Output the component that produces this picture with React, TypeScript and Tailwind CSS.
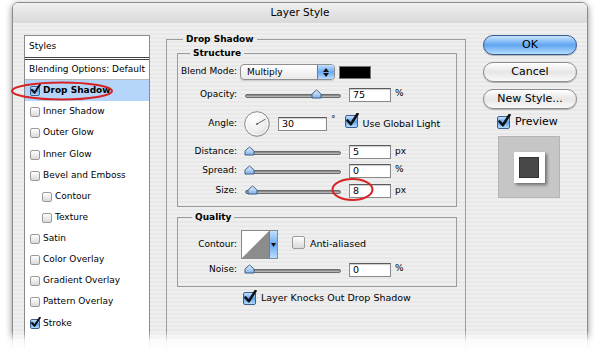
import React from "react";

type Box = "sm" | "lg";

function Check({ on = false, box = "sm" }: { on?: boolean; box?: Box }) {
  const size = box === "sm" ? "h-[10px] w-[10px]" : "h-[13px] w-[13px]";
  const face = on
    ? "border-[#3d5f8f] bg-gradient-to-b from-[#c4e2ff] via-[#5aa2ee] to-[#b3dcff]"
    : "border-[#9a9a9a] bg-gradient-to-b from-[#ffffff] to-[#d9d9d9]";
  return (
    <span className={`relative inline-block shrink-0 rounded-[2px] border ${size} ${face}`}>
      {on && (
        <svg
          viewBox="0 0 14 14"
          className="absolute -left-[1px] -top-[3px] h-[calc(100%+3px)] w-[calc(100%+3px)]"
        >
          <path
            d="M2.5 7.5 L5.8 11.2 L12.5 1"
            fill="none"
            stroke="#111"
            strokeWidth="2.6"
            strokeLinecap="round"
            strokeLinejoin="round"
          />
        </svg>
      )}
    </span>
  );
}

const layers = [
  { name: "Drop Shadow", on: true, sel: true },
  { name: "Inner Shadow" },
  { name: "Outer Glow" },
  { name: "Inner Glow", gap: true },
  { name: "Bevel and Emboss" },
  { name: "Contour", sub: true },
  { name: "Texture", sub: true },
  { name: "Satin" },
  { name: "Color Overlay" },
  { name: "Gradient Overlay" },
  { name: "Pattern Overlay" },
  { name: "Stroke", on: true, gap: true },
];

function Slider({ pos }: { pos: number }) {
  return (
    <div className="relative ml-[8px] h-[14px] w-[96px]">
      <div className="absolute left-0 right-0 top-[6px] h-[4px] rounded-full border border-[#6d6d6d] bg-gradient-to-b from-[#7c7c7c] to-[#c4c4c4]" />
      <svg
        width="11"
        height="10"
        viewBox="0 0 11 10"
        className="absolute top-[1px]"
        style={{ left: pos - 5 }}
      >
        <defs>
          <linearGradient id="thumb" x1="0" y1="0" x2="0" y2="1">
            <stop offset="0" stopColor="#e6f2ff" />
            <stop offset="1" stopColor="#7fb1e8" />
          </linearGradient>
        </defs>
        <path
          d="M1 9 L1 5.5 Q1 4.5 2 4 L5.5 1 L9 4 Q10 4.5 10 5.5 L10 9 Z"
          fill="url(#thumb)"
          stroke="#3f5f86"
          strokeWidth="1"
        />
      </svg>
    </div>
  );
}

function Field({ value, w = "w-[42px]", ml = "ml-[8px]" }: { value: string; w?: string; ml?: string }) {
  return (
    <div
      className={`${ml} ${w} h-[14px] border border-[#8a8a8a] border-t-[#5a5a5a] bg-white pl-[3px] text-[9.5px] leading-[12px] shadow-[inset_0_1px_1px_rgba(0,0,0,0.2)]`}
    >
      {value}
    </div>
  );
}

function Label({ text }: { text: string }) {
  return <span className="w-[59px] shrink-0 text-right">{text}</span>;
}

function AquaButton({ text, primary = false, mt }: { text: string; primary?: boolean; mt: string }) {
  const face = primary
    ? "border-[#36598f] bg-gradient-to-b from-[#c9e5ff] via-[#5fa4f0] to-[#b5defe]"
    : "border-[#8c8c8c] bg-gradient-to-b from-[#ffffff] via-[#e6e6e6] to-[#f9f9f9]";
  return (
    <div
      className={`${mt} flex h-[20px] w-[94px] items-center justify-center rounded-full border text-[11px] shadow-[0_1px_1px_rgba(0,0,0,0.25)] ${face}`}
    >
      {text}
    </div>
  );
}

export default function App() {
  return (
    <div className="relative h-[351px] w-[600px] overflow-hidden bg-white font-['DejaVu_Sans',sans-serif] text-black">
      <div className="mx-[12px] mt-[2px] h-[380px] overflow-hidden rounded-t-[6px] border border-[#8d8d8d] shadow-[0_2px_7px_rgba(0,0,0,0.45)]">
        {/* title bar */}
        <div className="flex h-[20px] items-center justify-center bg-gradient-to-b from-[#f0f0f0] to-[#d8d8d8] text-[10.5px]">
          Layer Style
        </div>

        <div className="flex h-full bg-[repeating-linear-gradient(180deg,#efefef_0px,#efefef_2px,#e8e8e8_2px,#e8e8e8_4px)]">
          {/* styles list */}
          <div className="ml-[11px] mt-[12px] h-[330px] w-[126px] border border-[#8a8a8a] bg-white text-[9px]">
            <div className="flex h-[24px] items-center border-b-[3px] border-double border-[#444] pl-[4px]">
              Styles
            </div>
            <div className="flex h-[20px] items-center border-b border-[#b8b8b8] pl-[4px]">
              Blending Options: Default
            </div>
            {layers.map((l) => (
              <div
                key={l.name}
                className={`flex h-[21px] items-center gap-[3px] ${l.gap ? "mt-[1px]" : ""} ${
                  l.sub ? "pl-[17px]" : "pl-[5px]"
                } ${l.sel ? "bg-[#b5d5fb] font-bold" : ""}`}
              >
                <Check on={l.on} />
                <span>{l.name}</span>
              </div>
            ))}
          </div>

          {/* drop shadow group */}
          <fieldset className="ml-[16px] mt-[10px] h-[330px] w-[300px] border border-[#9c9c9c] text-[9px]">
            <legend className="ml-[16px] px-[3px] font-bold leading-[12px]">Drop Shadow</legend>
            <div className="pl-[10px] pr-[8px]">
              <fieldset className="mt-[2px] border border-[#9c9c9c] pb-[8px]">
                <legend className="ml-[12px] px-[3px] font-bold leading-[12px]">Structure</legend>

                <div className="mt-[5px] flex h-[16px] items-center">
                  <Label text="Blend Mode:" />
                  <div className="ml-[3px] flex h-[16px] w-[95px] overflow-hidden rounded-[4px] border border-[#8f8f8f] bg-gradient-to-b from-white to-[#e9e9e9] shadow-[0_1px_1px_rgba(0,0,0,0.15)]">
                    <span className="flex-1 pl-[6px] leading-[14px]">Multiply</span>
                    <span className="flex w-[17px] flex-col items-center justify-center gap-[1px] border-l border-[#5b7fae] bg-gradient-to-b from-[#c3e0ff] via-[#6aa9ef] to-[#b8dcff]">
                      <svg width="6" height="4" viewBox="0 0 6 4">
                        <path d="M0 4 L3 0 L6 4 Z" fill="#111" />
                      </svg>
                      <svg width="6" height="4" viewBox="0 0 6 4">
                        <path d="M0 0 L3 4 L6 0 Z" fill="#111" />
                      </svg>
                    </span>
                  </div>
                  <div className="ml-[4px] h-[13px] w-[32px] border border-[#777] bg-black" />
                </div>

                <div className="mt-[8px] flex h-[14px] items-center">
                  <Label text="Opacity:" />
                  <Slider pos={71} />
                  <Field value="75" />
                  <span className="ml-[4px] -mt-[3px]">%</span>
                </div>

                <div className="mt-[9px] flex h-[26px] items-center">
                  <Label text="Angle:" />
                  <svg width="26" height="26" viewBox="0 0 26 26" className="ml-[7px]">
                    <defs>
                      <radialGradient id="dial" cx="0.35" cy="0.3" r="0.8">
                        <stop offset="0" stopColor="#ffffff" />
                        <stop offset="0.7" stopColor="#ececec" />
                        <stop offset="1" stopColor="#c9c9c9" />
                      </radialGradient>
                    </defs>
                    <circle cx="13" cy="13" r="12.3" fill="url(#dial)" stroke="#8a8a8a" strokeWidth="1" />
                    <circle cx="13" cy="13" r="10.8" fill="none" stroke="#ffffff" strokeWidth="0.8" />
                    <line x1="13" y1="13" x2="21.5" y2="8.1" stroke="#555" strokeWidth="0.9" />
                    <circle cx="13" cy="13" r="0.9" fill="#555" />
                  </svg>
                  <Field value="30" w="w-[49px]" />
                  <span className="ml-[4px] -mt-[8px]">°</span>
                  <span className="ml-[9px]">
                    <Check on box="lg" />
                  </span>
                  <span className="ml-[5px] text-[9.5px]">Use Global Light</span>
                </div>

                <div className="mt-[8px] flex h-[14px] items-center">
                  <Label text="Distance:" />
                  <Slider pos={4} />
                  <Field value="5" />
                  <span className="ml-[4px]">px</span>
                </div>

                <div className="mt-[5px] flex h-[14px] items-center">
                  <Label text="Spread:" />
                  <Slider pos={4} />
                  <Field value="0" />
                  <span className="ml-[4px] -mt-[3px]">%</span>
                </div>

                <div className="mt-[6px] flex h-[14px] items-center">
                  <Label text="Size:" />
                  <Slider pos={7} />
                  <Field value="8" />
                  <span className="ml-[4px]">px</span>
                </div>
              </fieldset>

              <fieldset className="mt-[4px] border border-[#9c9c9c] pb-[9px]">
                <legend className="ml-[14px] px-[3px] font-bold leading-[12px]">Quality</legend>

                <div className="mt-[7px] flex h-[29px] items-center">
                  <Label text="Contour:" />
                  <div className="ml-[4px] flex h-[29px] w-[37px] border border-[#8a8a8a] bg-white">
                    <svg viewBox="0 0 28 27" className="h-full flex-1" preserveAspectRatio="none">
                      <path d="M0 27 L28 0 L28 27 Z" fill="#8c8c8c" />
                    </svg>
                    <span className="flex w-[8px] items-center justify-center border-l border-[#5b7fae] bg-gradient-to-b from-[#c3e0ff] via-[#6aa9ef] to-[#b8dcff]">
                      <svg width="5" height="4" viewBox="0 0 5 4">
                        <path d="M0 0 L2.5 4 L5 0 Z" fill="#111" />
                      </svg>
                    </span>
                  </div>
                  <span className="ml-[14px]">
                    <Check box="lg" />
                  </span>
                  <span className="ml-[5px] text-[9.5px]">Anti-aliased</span>
                </div>

                <div className="mt-[4px] flex h-[14px] items-center">
                  <Label text="Noise:" />
                  <Slider pos={4} />
                  <Field value="0" />
                  <span className="ml-[4px] -mt-[3px]">%</span>
                </div>
              </fieldset>

              <div className="mt-[5px] flex h-[13px] items-center pl-[66px]">
                <Check on box="lg" />
                <span className="ml-[5px] text-[9.5px]">Layer Knocks Out Drop Shadow</span>
              </div>
            </div>
          </fieldset>

          {/* buttons */}
          <div className="ml-[17px] mt-[12px] flex w-[94px] flex-col">
            <AquaButton text="OK" primary mt="mt-0" />
            <AquaButton text="Cancel" mt="mt-[7px]" />
            <AquaButton text="New Style..." mt="mt-[7px]" />
            <div className="ml-[14px] mt-[6px] flex h-[14px] items-center">
              <Check on box="lg" />
              <span className="ml-[5px] text-[11px]">Preview</span>
            </div>
            <div className="ml-[15px] mt-[7px] flex h-[62px] w-[62px] items-center justify-center border border-[#b4b4b4] bg-[#c6c6c6]">
              <div className="flex h-[31px] w-[31px] items-center justify-center bg-white shadow-[2px_2px_3px_rgba(0,0,0,0.45)]">
                <div className="h-[21px] w-[20px] border border-[#333] bg-[#484848]" />
              </div>
            </div>
          </div>
        </div>
      </div>

      {/* fade at the bottom */}
      <div className="pointer-events-none absolute inset-x-0 bottom-0 h-[20px] bg-gradient-to-b from-white/0 via-white/85 to-white" />

      {/* red highlight marks */}
      <svg className="pointer-events-none absolute left-0 top-0" width="600" height="351">
        <ellipse cx="62" cy="91" rx="50" ry="8.5" fill="none" stroke="#d62222" strokeWidth="2" />
        <ellipse cx="352.5" cy="189.5" rx="20" ry="10.5" fill="none" stroke="#d62222" strokeWidth="2" />
      </svg>
    </div>
  );
}
